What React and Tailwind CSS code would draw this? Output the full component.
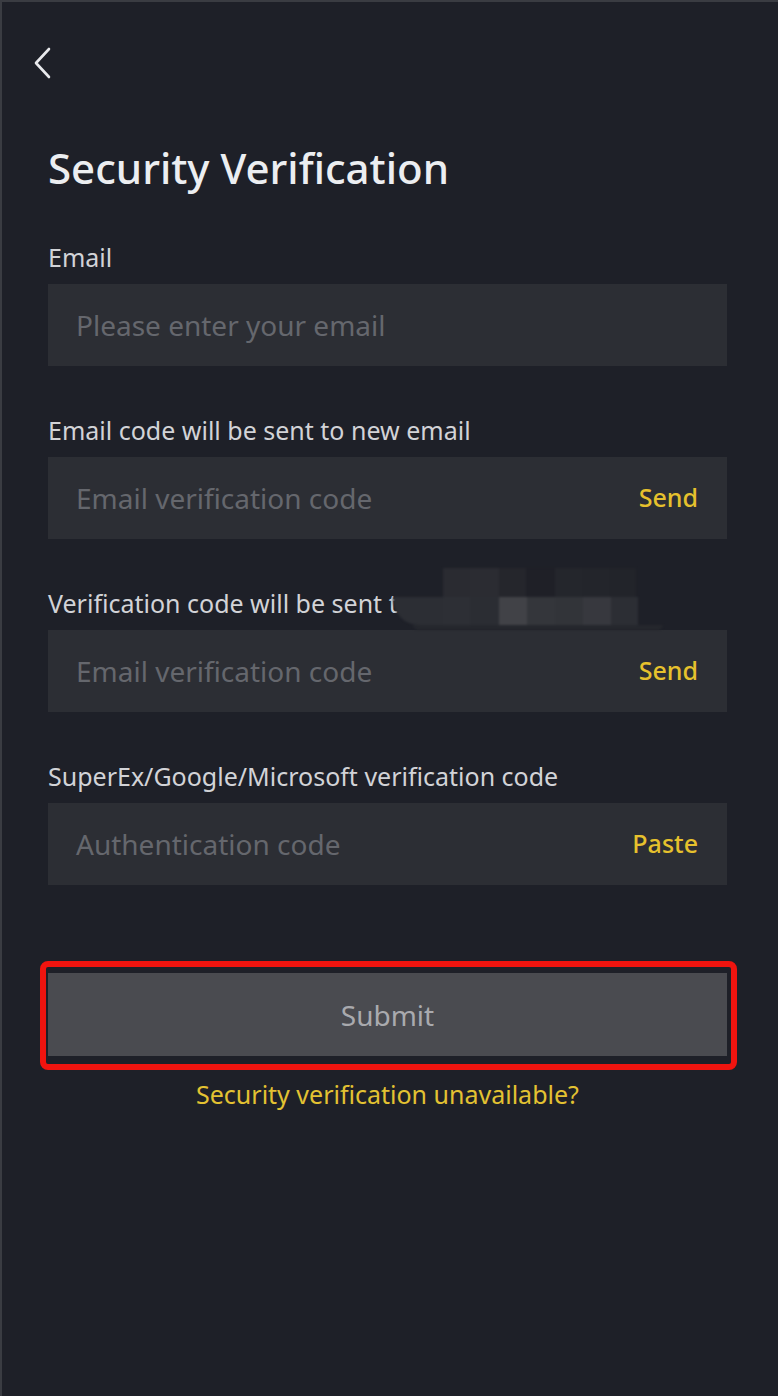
import React from "react";

const font = { fontFamily: '"Noto Sans", "Open Sans", Arial, sans-serif' };

function Field({ label, placeholder, action, children }) {
  return (
    <div className="mt-[49px] first:mt-0">
      <div className="relative h-[30px] mb-[12px] text-[25px] leading-[30px] text-[#d2d3d7]">
        {label}
        {children}
      </div>
      <div className="flex items-center justify-between h-[82px] bg-[#2c2e34] pl-[28px] pr-[29px]">
        <span className="text-[28px] text-[#65676d]">{placeholder}</span>
        {action && (
          <span className="text-[25px] font-medium text-[#e6c12d]">{action}</span>
        )}
      </div>
    </div>
  );
}

// pixelated patch hiding the address in the third label
function Mosaic() {
  return (
    <div className="absolute left-[345px] top-[-20px] w-[275px] h-[66px] blur-[1px]">
      <div className="flex h-[29px] pl-[50px]">
        <div className="w-[27px] bg-[#2a2b31]" />
        <div className="w-[29px] bg-[#2b2c32]" />
        <div className="w-[27px] bg-[#25262c]" />
        <div className="w-[29px] bg-[#1f2027]" />
        <div className="w-[27px] bg-[#24262c]" />
        <div className="w-[27px] bg-[#23252b]" />
        <div className="w-[27px] bg-[#22242a]" />
      </div>
      <div className="flex h-[28px] w-[245px] rounded-bl-[26px] overflow-hidden">
        <div className="w-[50px] bg-[#2c2e34]" />
        <div className="w-[27px] bg-[#2d2f35]" />
        <div className="w-[29px] bg-[#2b2d33]" />
        <div className="w-[28px] bg-[#414247]" />
        <div className="w-[28px] bg-[#34363b]" />
        <div className="w-[28px] bg-[#323439]" />
        <div className="w-[28px] bg-[#37383e]" />
        <div className="w-[27px] bg-[#2c2e34]" />
      </div>
      <div className="ml-[20px] h-[5px] w-[250px] rounded-b-full bg-[#25272d]" />
    </div>
  );
}

export default function App() {
  return (
    <div
      className="w-[778px] h-[1396px] bg-[#1e2028] border-t-[2px] border-l-[2px] border-[#3a3c42] overflow-hidden"
      style={font}
    >
      <div className="pt-[44px] pl-[29px] h-[100px]">
        <svg width="22" height="34" viewBox="0 0 22 34" fill="none">
          <path
            d="M18 3 L5 17 L18 31"
            stroke="#e8e9ec"
            strokeWidth="2.6"
            strokeLinecap="round"
            strokeLinejoin="round"
          />
        </svg>
      </div>

      <div className="pl-[46px] pr-[51px]">
        <h1 className="mt-[40px] text-[42px] leading-[52px] font-medium text-[#eceef1]">
          Security Verification
        </h1>

        <div className="mt-[48px]">
          <Field label="Email" placeholder="Please enter your email" />
          <Field
            label="Email code will be sent to new email"
            placeholder="Email verification code"
            action="Send"
          />
          <Field
            label="Verification code will be sent t"
            placeholder="Email verification code"
            action="Send"
          >
            <Mosaic />
          </Field>
          <Field
            label="SuperEx/Google/Microsoft verification code"
            placeholder="Authentication code"
            action="Paste"
          />
        </div>

        <div className="mt-[76px] -ml-[8px] -mr-[10px] rounded-[8px] border-[6px] border-[#f0140f] pl-[2px] pr-[4px] pt-[6px] pb-[8px]">
          <button className="flex w-full h-[83px] items-center justify-center bg-[#4a4b50] text-[28px] text-[#a9aaae]">
            Submit
          </button>
        </div>

        <p className="mt-[6px] text-center text-[25px] text-[#e3c232]">
          Security verification unavailable?
        </p>
      </div>
    </div>
  );
}
